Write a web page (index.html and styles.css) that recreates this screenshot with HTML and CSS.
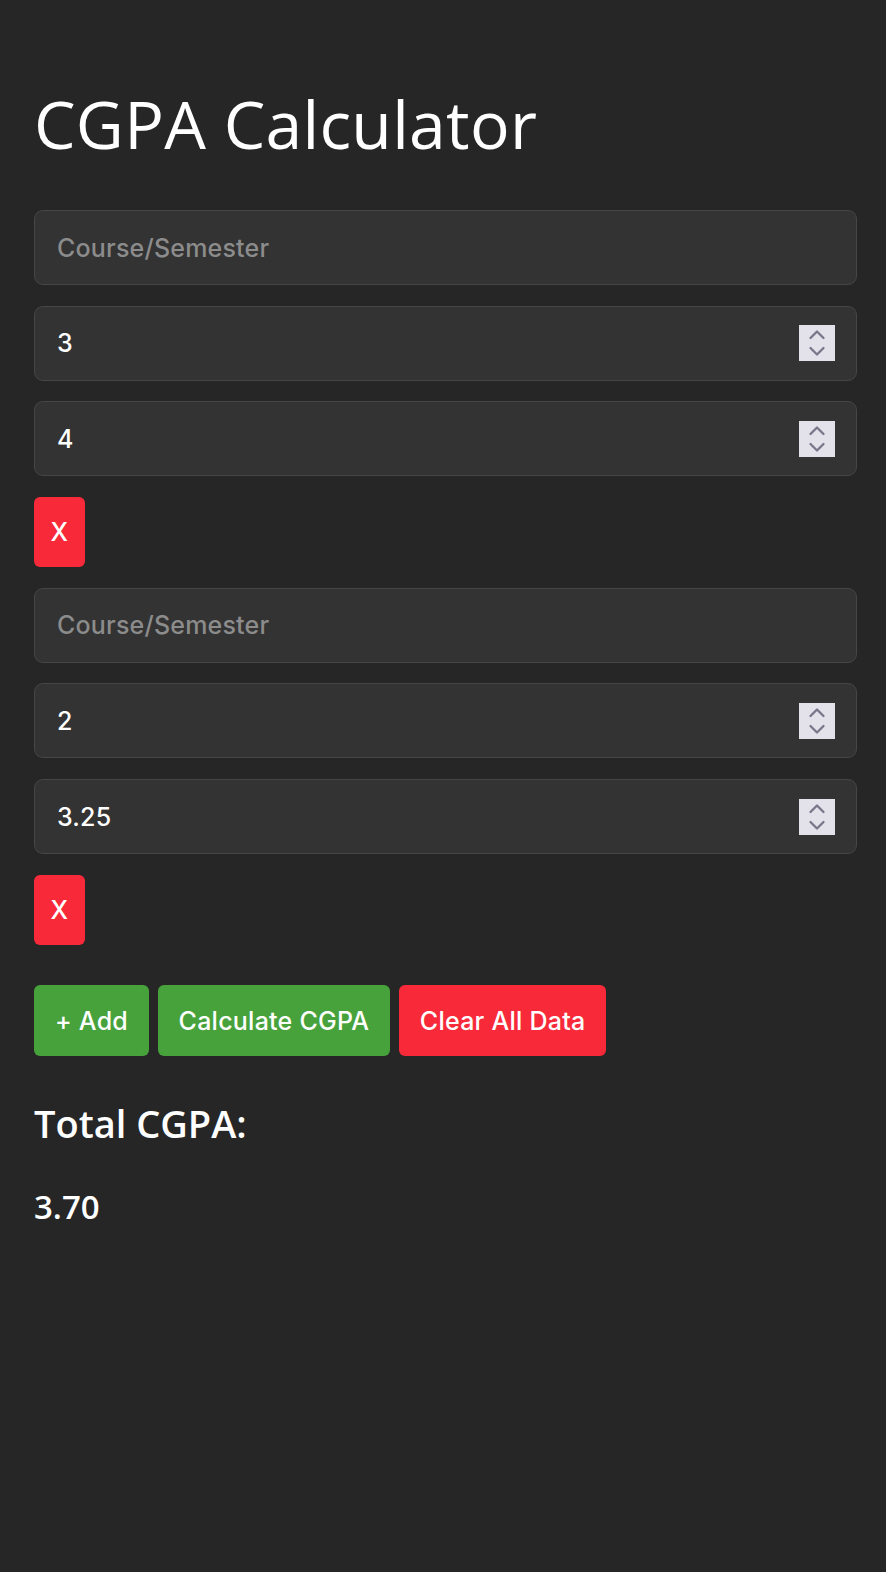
FILE: index.html
```html
<!DOCTYPE html>
<html lang="en">
<head>
<meta charset="utf-8">
<title>CGPA Calculator</title>
<link rel="stylesheet" href="styles.css">
</head>
<body>
<div class="app">
  <h1 class="title">CGPA Calculator</h1>
  <div class="entries">
    <div class="entry">
      <input class="field" type="text" placeholder="Course/Semester">
      <div class="field number">
        <input class="num-input" type="text" value="3">
        <span class="spinner"><svg width="36" height="36" viewBox="0 0 36 36"><path d="M11.5 13 L18 6.5 L24.5 13 M11.5 23 L18 29.5 L24.5 23" fill="none" stroke="#77768a" stroke-width="2.3" stroke-linecap="round" stroke-linejoin="round"/></svg></span>
      </div>
      <div class="field number">
        <input class="num-input" type="text" value="4">
        <span class="spinner"><svg width="36" height="36" viewBox="0 0 36 36"><path d="M11.5 13 L18 6.5 L24.5 13 M11.5 23 L18 29.5 L24.5 23" fill="none" stroke="#77768a" stroke-width="2.3" stroke-linecap="round" stroke-linejoin="round"/></svg></span>
      </div>
      <button class="btn remove">X</button>
    </div>
    <div class="entry">
      <input class="field" type="text" placeholder="Course/Semester">
      <div class="field number">
        <input class="num-input" type="text" value="2">
        <span class="spinner"><svg width="36" height="36" viewBox="0 0 36 36"><path d="M11.5 13 L18 6.5 L24.5 13 M11.5 23 L18 29.5 L24.5 23" fill="none" stroke="#77768a" stroke-width="2.3" stroke-linecap="round" stroke-linejoin="round"/></svg></span>
      </div>
      <div class="field number">
        <input class="num-input" type="text" value="3.25">
        <span class="spinner"><svg width="36" height="36" viewBox="0 0 36 36"><path d="M11.5 13 L18 6.5 L24.5 13 M11.5 23 L18 29.5 L24.5 23" fill="none" stroke="#77768a" stroke-width="2.3" stroke-linecap="round" stroke-linejoin="round"/></svg></span>
      </div>
      <button class="btn remove">X</button>
    </div>
  </div>
  <div class="actions">
    <button class="btn green">+ Add</button>
    <button class="btn green">Calculate CGPA</button>
    <button class="btn red">Clear All Data</button>
  </div>
  <h2 class="total-label">Total CGPA:</h2>
  <p class="total-value">3.70</p>
</div>
</body>
</html>
```

FILE: styles.css
```css
html, body {
  margin: 0;
  padding: 0;
  background: #262626;
}

body {
  min-height: 1572px;
  font-family: "Open Sans", "Noto Sans", sans-serif;
  color: #ffffff;
}

.app {
  padding: 85px 29px 40px 34px;
  width: 823px;
}

.title {
  margin: 0 0 48px 0;
  font-family: "Open Sans", sans-serif;
  font-weight: 400;
  font-size: 66px;
  line-height: 77px;
  letter-spacing: 0.3px;
}

.entries,
.entry {
  display: flex;
  flex-direction: column;
  gap: 20.7px;
}

.entry {
  align-items: flex-start;
}

.field {
  box-sizing: border-box;
  width: 100%;
  height: 75px;
  margin: 0;
  padding: 0 21px 0 22px;
  background: #333333;
  border: 1px solid #464646;
  border-radius: 9px;
  font-family: Inter, "Liberation Sans", sans-serif;
  font-size: 25px;
  font-weight: 500;
  letter-spacing: 0.2px;
  color: #ffffff;
  outline: none;
}

.field::placeholder {
  color: #8c8c8c;
}

.number {
  display: flex;
  align-items: center;
}

.num-input {
  flex: 1;
  min-width: 0;
  border: 0;
  padding: 0;
  margin: 0;
  background: transparent;
  font-family: Inter, "Liberation Sans", sans-serif;
  font-size: 25px;
  font-weight: 500;
  letter-spacing: 0.2px;
  color: #ffffff;
  outline: none;
}

.spinner {
  display: block;
  width: 36px;
  height: 36px;
  background: #e3e2ea;
}

.spinner svg {
  display: block;
}

.btn {
  box-sizing: border-box;
  height: 71px;
  margin: 0;
  padding: 0 21px;
  border: 0;
  border-radius: 6px;
  font-family: Inter, "Liberation Sans", sans-serif;
  font-size: 25px;
  font-weight: 500;
  letter-spacing: 0.25px;
  color: #ffffff;
}

.remove {
  width: 51px;
  height: 70px;
  padding: 0;
  background: #f82a39;
}

.green {
  background: #47a23c;
}

.red {
  background: #f82a39;
}

.actions {
  display: flex;
  gap: 8.5px;
  margin-top: 40.5px;
}

.total-label {
  margin: 45px 0 0 0;
  font-family: "Open Sans", sans-serif;
  font-weight: 600;
  font-size: 38px;
  line-height: 44px;
}

.total-value {
  margin: 42px 0 0 0;
  font-family: "Open Sans", sans-serif;
  font-weight: 600;
  font-size: 33px;
  line-height: 40px;
}
```
